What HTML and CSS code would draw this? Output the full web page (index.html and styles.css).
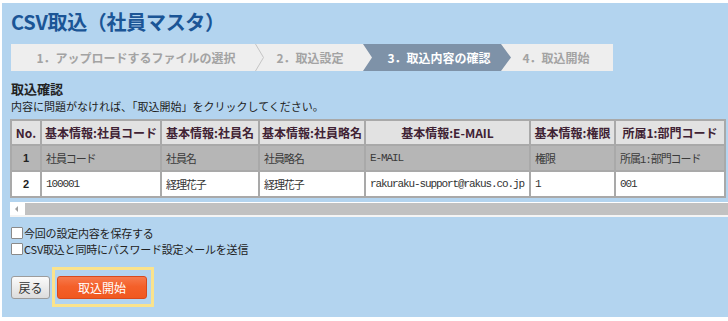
FILE: index.html
```html
<!DOCTYPE html>
<html lang="ja">
<head>
<meta charset="utf-8">
<link rel="stylesheet" href="styles.css">
</head>
<body>
<div class="page">
  <h1 class="title">CSV取込（社員マスタ）</h1>
  <div class="steps">
    <div class="step step1">1．アップロードするファイルの選択</div>
    <svg class="sep" width="10" height="27" viewBox="0 0 10 27"><polyline points="0.5,0 8.5,13.5 0.5,27" fill="none" stroke="#c4c4c4" stroke-width="1"/></svg>
    <div class="step step2">2．取込設定</div>
    <div class="step step3">3．取込内容の確認</div>
    <div class="step step4">4．取込開始</div>
  </div>
  <h2 class="section">取込確認</h2>
  <p class="desc">内容に問題がなければ、「取込開始」をクリックしてください。</p>
  <div class="tablewrap">
    <table class="grid">
      <colgroup>
        <col class="c0"><col class="c1"><col class="c2"><col class="c3"><col class="c4"><col class="c5"><col class="c6">
      </colgroup>
      <thead>
        <tr>
          <th>No.</th>
          <th>基本情報:社員コード</th>
          <th>基本情報:社員名</th>
          <th>基本情報:社員略名</th>
          <th>基本情報:E-MAIL</th>
          <th>基本情報:権限</th>
          <th>所属1:部門コード</th>
        </tr>
      </thead>
      <tbody>
        <tr class="r1">
          <td class="no">1</td>
          <td>社員コード</td>
          <td>社員名</td>
          <td>社員略名</td>
          <td>E-MAIL</td>
          <td>権限</td>
          <td>所属1:部門コード</td>
        </tr>
        <tr class="r2">
          <td class="no">2</td>
          <td>100001</td>
          <td>経理花子</td>
          <td>経理花子</td>
          <td>rakuraku-support@rakus.co.jp</td>
          <td>1</td>
          <td>001</td>
        </tr>
      </tbody>
    </table>
  </div>
  <div class="scrollbar">
    <span class="arrow"></span>
    <div class="thumb"></div>
  </div>
  <label class="check first"><span class="box"></span>今回の設定内容を保存する</label>
  <label class="check"><span class="box"></span>CSV取込と同時にパスワード設定メールを送信</label>
  <div class="actions">
    <button class="btn back">戻る</button>
    <div class="highlight">
      <button class="btn start">取込開始</button>
    </div>
  </div>
</div>
</body>
</html>
```

FILE: styles.css
```css
html, body {
  margin: 0;
  padding: 0;
  background: #ffffff;
  height: 100%;
}
body {
  font-family: "Noto Sans CJK JP", "Liberation Sans", sans-serif;
  overflow: hidden;
}
.page {
  margin: 3px 0 0 2px;
  height: 314px;
  background: #b3d4ef;
  padding: 7px 0 0 9px;
  box-sizing: border-box;
  overflow: hidden;
}
.title {
  margin: 0;
  font-size: 20px;
  line-height: 24px;
  font-weight: bold;
  color: #1b5596;
  letter-spacing: -0.3px;
}
.steps {
  margin-top: 10px;
  display: flex;
  width: 602px;
  height: 27px;
  background: #eeeeee;
}
.step {
  height: 27px;
  line-height: 27px;
  font-size: 12px;
  font-weight: bold;
  color: #a3a3a3;
  text-align: center;
  box-sizing: border-box;
  white-space: nowrap;
}
.step1 { width: 244px; padding-left: 6px; }
.sep { flex: none; display: block; }
.step2 { width: 98px; padding-right: 8px; }
.step3 {
  width: 148px;
  background: #7e92a8;
  color: #ffffff;
  padding-left: 4px;
  clip-path: polygon(0 0, calc(100% - 10px) 0, 100% 50%, calc(100% - 10px) 100%, 0 100%, 9px 50%);
}
.step4 { width: 102px; padding-right: 12px; }
.section {
  margin: 10px 0 0;
  font-size: 13px;
  line-height: 16px;
  font-weight: bold;
  color: #222;
}
.desc {
  margin: 2px 0 0;
  font-size: 11px;
  line-height: 15px;
  color: #222;
}
.tablewrap {
  margin: 5px 0 0 -1px;
}
.grid {
  border-collapse: collapse;
  table-layout: fixed;
  width: 714px;
  background: #ffffff;
}
.c0 { width: 30px; }
.c1 { width: 120px; }
.c2 { width: 98px; }
.c3 { width: 106px; }
.c4 { width: 165px; }
.c5 { width: 85px; }
.c6 { width: 110px; }
.grid th, .grid td {
  border: 2px solid #a9a9a9;
  white-space: nowrap;
  overflow: hidden;
}
.grid th {
  height: 23px;
  background: #e2e2e2;
  color: #3f2234;
  font-size: 12px;
  font-weight: bold;
  text-align: center;
  padding: 0 2px;
}
.grid td {
  height: 24px;
  font-family: "Liberation Mono", "Noto Sans CJK JP", monospace;
  font-size: 11px;
  letter-spacing: -1.1px;
  color: #333;
  padding: 0 4px;
  text-align: left;
}
.grid td.no {
  text-align: center;
  font-weight: bold;
  color: #222;
  font-family: "Liberation Sans", sans-serif;
  letter-spacing: 0;
}
.r1 td { background: #b6b6b6; color: #3a3a3a; }
.r2 td { background: #ffffff; }
.scrollbar {
  margin: 4px 0 0 -1px;
  height: 12px;
  background: #ffffff;
  border-top: 1px solid #ffffff;
  border-bottom: 2px solid #f4f4f4;
  display: flex;
  align-items: center;
  padding-left: 15px;
  position: relative;
}
.arrow {
  position: absolute;
  left: 5px;
  top: 3px;
  width: 0;
  height: 0;
  border-top: 3px solid transparent;
  border-bottom: 3px solid transparent;
  border-right: 3px solid #a0a0a0;
}
.thumb {
  flex: 1;
  height: 12px;
  background: #c1c1c1;
}
.check {
  display: flex;
  align-items: center;
  font-size: 11px;
  line-height: 16px;
  color: #222;
  letter-spacing: -0.2px;
}
.check.first { margin-top: 8px; }
.box {
  width: 10px;
  height: 10px;
  background: #ffffff;
  border: 1px solid #8a8a8a;
  border-radius: 1px;
  margin-right: 1px;
  flex: none;
}
.actions {
  margin-top: 10px;
  display: flex;
  align-items: center;
  gap: 2px;
}
.btn {
  font-family: "Noto Sans CJK JP", sans-serif;
  font-size: 12px;
  height: 23px;
  padding: 0;
  box-sizing: border-box;
  border-radius: 3px;
  cursor: pointer;
}
.back {
  width: 39px;
  color: #333;
  background: linear-gradient(#fbfbfb, #dcdcdc);
  border: 1px solid #9c9c9c;
}
.highlight {
  border: 3px solid #fbe38c;
  padding: 6px 4px 5px 2px;
}
.start {
  display: block;
  width: 90px;
  color: #ffffff;
  background: linear-gradient(#f67a4c, #f4602a 45%, #f0581f);
  border: 1px solid #d8491c;
}
```
